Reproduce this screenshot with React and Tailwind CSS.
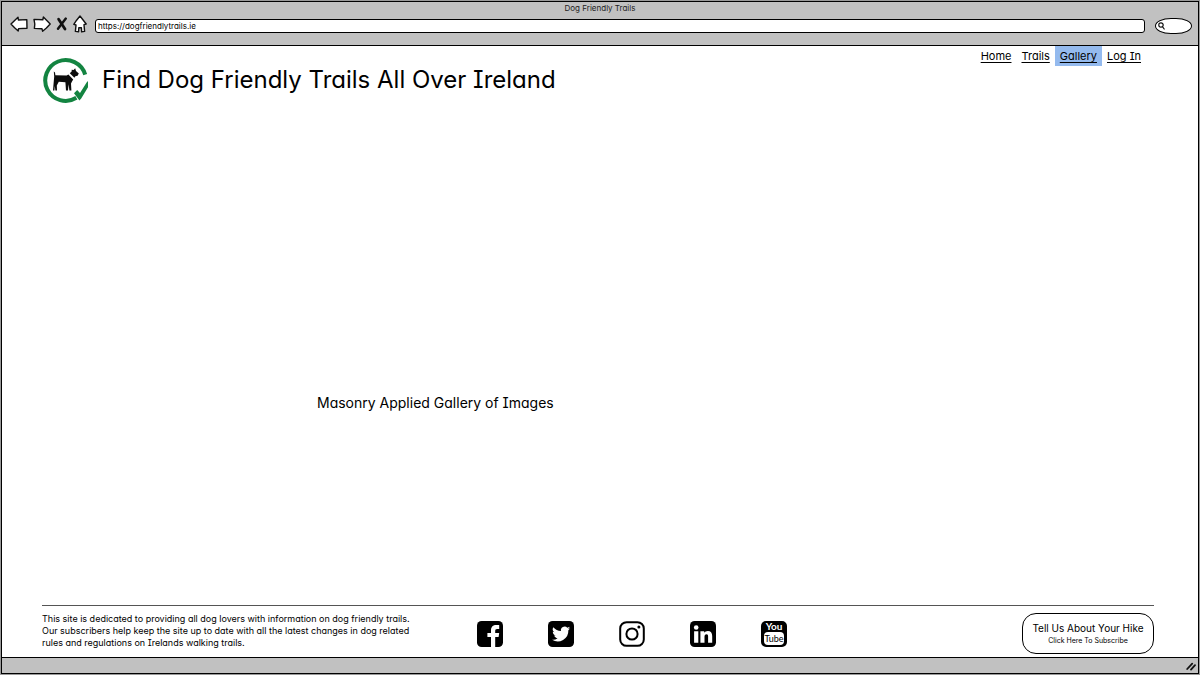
import React from "react";

const ink = { fill: "#fff", stroke: "#111", strokeWidth: 1.4, strokeLinejoin: "round", strokeLinecap: "round" };

function BackIcon() {
  return (
    <svg width="18" height="16" viewBox="0 0 18 16" {...ink}>
      <path d="M1 8 8 1.2 8.4 4 16.8 3.6 17 12.2 8.6 12.6 8.2 15 4.6 11.8Z" />
    </svg>
  );
}

function ForwardIcon() {
  return (
    <svg width="18" height="16" viewBox="0 0 18 16" {...ink}>
      <path d="M17.2 8 10.4 1 9.8 3.8 1 3.4 1.8 8 1.4 12.4 9 12.8 9.6 15.2 13.4 12Z" />
    </svg>
  );
}

function StopIcon() {
  return (
    <svg width="12" height="14" viewBox="0 0 12 14" fill="none" stroke="#111" strokeLinecap="round">
      <path d="M2.6 2.2 9 12" strokeWidth="2.8" />
      <path d="M9.8 1.6 2 11.8" strokeWidth="2.4" />
    </svg>
  );
}

function HomeIcon() {
  return (
    <svg width="14" height="18" viewBox="0 0 14 18" {...ink}>
      <path d="M7 1 13.2 9 11 9.6 11.6 16.4 8.6 16.8 8.4 12.8 5.8 12.8 5.6 16.8 2.4 16.4 3 10 .8 9.4 3.6 5.2Z" />
    </svg>
  );
}

function DogLogo() {
  return (
    <svg width="46" height="48" viewBox="0 0 46 48" className="shrink-0" role="img" aria-label="Dog Friendly Trails">
      <path d="M42.2 18.6A20.4 20.4 0 1 0 33.4 41.8" fill="none" stroke="#138441" strokeWidth="4" />
      <path d="M31 37.2 34.2 34 37 37 43.600 26.600 45 25 45 31.200 38.200 42.600 36.400 44.400Z" fill="#138441" />
      <path
        d="M10.8 15.400 12 16.400 12.400 19.200 23.600 19.400 25.400 18.400 30.200 23.400 29 25.600 28 27.400 28.400 34.600 26.400 34.600 25.600 28.200 25 34.600 23 34.600 22.400 26.200 15.800 25.800 13.800 29.400 14 34.600 12.400 34.600 11.800 30 11.400 34.600 10 34.600 10.600 27.200 11.200 20.600Z"
        fill="#0c0c0c"
      />
      <path d="M26.800 17.200 28.800 15.200 28.600 13.800 30.600 14 32.200 12.200 33 15 35.800 17.400 34.600 19.800 32.400 20.200 31.400 21.800Z" fill="#0c0c0c" />
    </svg>
  );
}

function Facebook() {
  return (
    <svg width="26" height="26" viewBox="0 0 26 26">
      <rect width="26" height="26" rx="4.6" />
      <path d="M14 26V16H10.4V12H14V9.2C14 5.8 16 3.9 19.2 3.9H22.2V7.9H20.2C18.6 7.9 18.2 8.6 18.2 9.900V12H22.200L21.600 16H18.200V26Z" fill="#fff" />
    </svg>
  );
}

function Twitter() {
  return (
    <svg width="26" height="26" viewBox="0 0 26 26">
      <rect width="26" height="26" rx="4.6" />
      <path
        transform="translate(3.6 3.4) scale(.79)"
        fill="#fff"
        d="M23.6 4.9c-.8.4-1.7.6-2.7.8 1-.6 1.7-1.5 2-2.6-.9.5-1.9.9-3 1.1a4.7 4.7 0 0 0-8 4.3A13.3 13.3 0 0 1 2.2 3.6a4.7 4.7 0 0 0 1.4 6.3c-.7 0-1.5-.2-2.1-.6v.1c0 2.3 1.6 4.2 3.8 4.6-.7.2-1.4.2-2.1.1.6 1.9 2.3 3.2 4.4 3.3A9.5 9.5 0 0 1 .6 19.3 13.4 13.4 0 0 0 21.2 7.4c.9-.7 1.7-1.5 2.4-2.5z"
      />
    </svg>
  );
}

function Instagram() {
  return (
    <svg width="26" height="26" viewBox="0 0 26 26" fill="none" stroke="#000">
      <rect x="1.2" y="1.2" width="23.6" height="23.6" rx="6.4" strokeWidth="2" />
      <circle cx="13" cy="13" r="5.6" strokeWidth="2" />
      <circle cx="19.9" cy="6.1" r="1.5" fill="#000" stroke="none" />
    </svg>
  );
}

function LinkedIn() {
  return (
    <svg width="26" height="26" viewBox="0 0 26 26">
      <rect width="26" height="26" rx="4.6" />
      <circle cx="6.2" cy="6.5" r="2.3" fill="#fff" />
      <path d="M4.1 10.2H8.3V21.8H4.1ZM10.4 10.2H14.2V11.8C15 10.6 16.2 9.9 17.9 9.9 20.7 9.9 22.2 11.7 22.2 15V21.8H18.1V15.6C18.1 14.1 17.7 13.3 16.5 13.3 15.1 13.3 14.5 14.2 14.5 15.7V21.8H10.4Z" fill="#fff" />
    </svg>
  );
}

function YouTube() {
  return (
    <span className="flex h-[26px] w-[26px] flex-col items-center rounded-[5px] bg-black font-['Lato','Liberation_Sans',sans-serif]">
      <span className="text-[10px] font-bold leading-[11px] text-white">You</span>
      <span className="w-5 rounded-[4px] bg-white text-center text-[9px] leading-[13px] text-black">Tube</span>
    </span>
  );
}

const links = ["Home", "Trails", "Gallery", "Log In"];
const socials = [
  ["Facebook", Facebook],
  ["Twitter", Twitter],
  ["Instagram", Instagram],
  ["LinkedIn", LinkedIn],
  ["YouTube", YouTube],
];

export default function App() {
  return (
    <div className="flex min-h-screen flex-col bg-[#999] p-px font-['Inter','Open_Sans',sans-serif] text-black [font-feature-settings:'cv08','cv11']">
      <div className="flex flex-1 flex-col border border-black bg-white">
        <div className="border-b border-black bg-[#c1c1c1] pb-[11px]">
          <div className="text-center text-[8px] leading-3 text-[#222]">Dog Friendly Trails</div>
          <div className="flex items-center pl-2 pr-1.5">
            <div className="flex items-center gap-[5px]">
              <button aria-label="Back"><BackIcon /></button>
              <button aria-label="Forward"><ForwardIcon /></button>
              <button aria-label="Stop"><StopIcon /></button>
              <button aria-label="Home page"><HomeIcon /></button>
            </div>
            <input
              aria-label="Address"
              defaultValue="https://dogfriendlytrails.ie"
              className="ml-2 mr-2.5 mt-1 h-3.5 min-w-0 flex-1 rounded-[3px] border border-black bg-white px-0.5 text-[8px] leading-3 outline-none"
            />
            <label className="mt-1 flex h-4 w-[37px] items-center rounded-[16px/8px] border border-black bg-white pl-0.5">
              <svg width="7" height="8" viewBox="0 0 7 8" fill="none" stroke="#111" strokeWidth="1.2" strokeLinecap="round">
                <circle cx="3" cy="3" r="2.2" />
                <path d="M4.6 4.8 6.2 7" />
              </svg>
              <input aria-label="Search" className="w-5 min-w-0 bg-transparent text-[8px] outline-none" />
            </label>
          </div>
        </div>

        <header className="flex items-start justify-between pl-[41px] pr-[52px]">
          <div className="flex items-center gap-[13px] pt-[10px]">
            <DogLogo />
            <h1 className="text-2xl leading-8">Find Dog Friendly Trails All Over Ireland</h1>
          </div>
          <nav className="flex text-[11px] leading-5">
            {links.map((l) => (
              <a
                key={l}
                href="#"
                aria-current={l === "Gallery" ? "page" : undefined}
                className="px-[5px] underline decoration-1 underline-offset-2 aria-[current=page]:bg-[#94baee]"
              >
                {l}
              </a>
            ))}
          </nav>
        </header>

        <main className="flex flex-1 items-center pl-[315px] pt-24">
          <p className="text-sm leading-5">Masonry Applied Gallery of Images</p>
        </main>

        <footer className="mx-10 mr-11 flex items-center justify-between border-t border-[#555] pb-[3px] pt-[7px]">
          <p className="w-[400px] self-start text-[9px] leading-3">
            This site is dedicated to providing all dog lovers with information on dog friendly trails.
            <br />
            Our subscribers help keep the site up to date with all the latest changes in dog related
            <br />
            rules and regulations on Irelands walking trails.
          </p>
          <div className="mr-auto flex gap-[45px] pl-[35px]">
            {socials.map(([name, Icon]) => (
              <a key={name} href="#" aria-label={name}><Icon /></a>
            ))}
          </div>
          <button className="flex h-[41px] w-[132px] flex-col items-center justify-center rounded-[14px] border border-black">
            <span className="text-[10px] leading-[14px]">Tell Us About Your Hike</span>
            <span className="text-[7px] leading-3">Click Here To Subscribe</span>
          </button>
        </footer>

        <div className="flex h-4 items-end justify-end border-t border-black bg-[#c1c1c1] p-0.5">
          <svg width="10" height="9" viewBox="0 0 10 9" stroke="#111" strokeWidth="1.8" strokeLinecap="round">
            <path d="M1.2 7 6.2 1.6M5 7.6 9 3.2" />
          </svg>
        </div>
      </div>
    </div>
  );
}
